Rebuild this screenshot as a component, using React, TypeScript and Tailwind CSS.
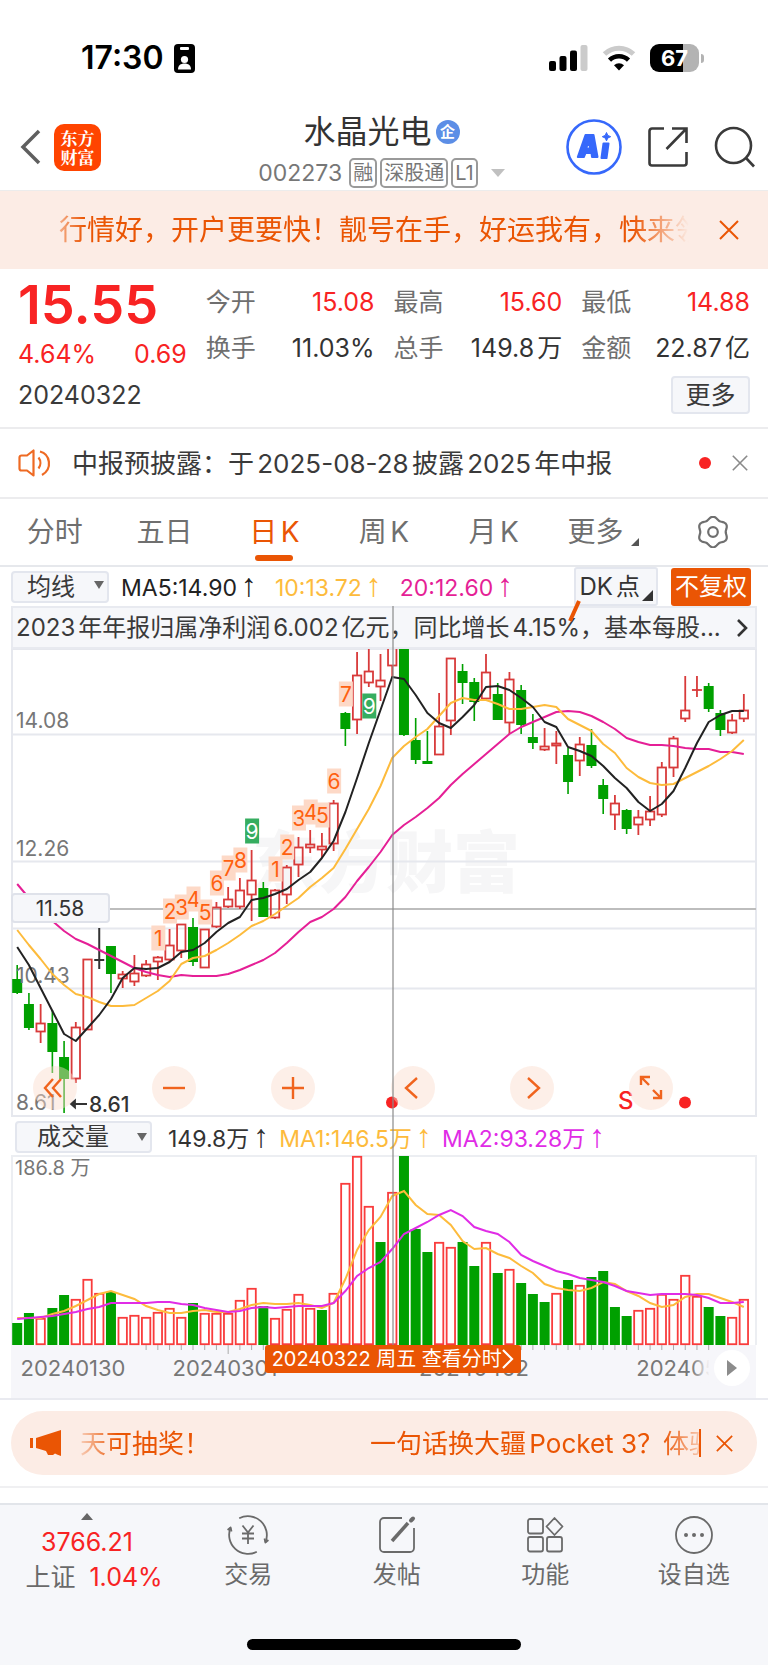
import React from "react";
import { clsx } from "clsx";

type Candle = [high: number, top: number, bottom: number, low: number, kind: "up" | "down" | "flat"];

const STEP = 11.72;
const cx = (i: number) => 6.2 + STEP * i;

const CANDLES: Candle[] = [
  [316, 330, 344, 345, "down"], [344, 355, 379, 381, "down"], [355, 374, 383, 394, "up"],
  [361, 374, 403, 424, "down"], [392, 408, 430, 464, "down"], [373, 378, 430, 434, "up"],
  [310, 310, 381, 381, "up"], [279, 311, 311, 320, "flat"], [297, 297, 325, 344, "down"],
  [322, 325, 330, 339, "up"], [306, 324, 333, 337, "up"], [311, 315, 327, 328, "up"],
  [307, 308, 313, 331, "up"], [280, 296, 311, 313, "up"], [275, 275, 302, 309, "up"],
  [269, 278, 313, 317, "down"], [280, 280, 319, 319, "up"], [253, 258, 278, 279, "up"],
  [238, 250, 258, 259, "up"], [229, 241, 258, 260, "up"], [201, 231, 246, 272, "up"],
  [233, 239, 268, 268, "down"], [240, 241, 269, 270, "up"], [216, 218, 246, 255, "up"],
  [188, 198, 216, 228, "up"], [181, 195, 199, 204, "up"], [184, 197, 201, 209, "up"],
  [151, 154, 195, 202, "up"], [63, 64, 80, 97, "down"], [3, 26, 71, 85, "up"],
  [0, 22, 34, 38, "up"], [5, 31, 38, 52, "up"], [-8, -6, 17, 29, "up"],
  [-1, -1, 86, 87, "down"], [69, 91, 111, 115, "down"], [82, 112, 115, 115, "down"],
  [44, 77, 106, 106, "up"], [9, 9, 72, 86, "up"], [15, 22, 34, 55, "down"],
  [29, 33, 53, 72, "down"], [5, 23, 50, 51, "up"], [34, 45, 71, 71, "down"],
  [23, 30, 74, 85, "up"], [36, 41, 76, 85, "down"], [65, 88, 94, 100, "down"],
  [79, 97, 101, 102, "up"], [82, 94, 97, 115, "up"], [99, 106, 133, 145, "down"],
  [88, 95, 112, 127, "up"], [80, 96, 117, 119, "down"], [130, 136, 150, 165, "down"],
  [146, 154, 166, 181, "up"], [160, 161, 180, 185, "down"], [161, 168, 176, 186, "up"],
  [147, 162, 171, 177, "up"], [113, 118, 166, 168, "up"], [87, 89, 119, 128, "up"],
  [27, 61, 70, 73, "up"], [27, 41, 41, 48, "up"], [34, 37, 60, 63, "down"],
  [61, 64, 81, 87, "down"], [65, 71, 84, 85, "up"], [45, 61, 70, 73, "up"],
];

const MA5 = [298, 316, 339, 362, 385, 392, 379, 366, 350, 329, 319, 320, 319, 313, 303, 301, 294, 283, 274, 268, 251, 249, 245, 240, 231, 223, 209, 192, 163, 129, 94, 61, 28, 30, 46, 64, 74, 79, 68, 56, 38, 37, 41, 49, 58, 73, 78, 98, 102, 107, 117, 129, 139, 153, 162, 155, 142, 119, 94, 73, 66, 62, 62];
const MA10 = [281, 296, 310, 325, 336, 345, 348, 353, 357, 357, 356, 349, 342, 332, 315, 309, 307, 301, 294, 286, 277, 272, 265, 257, 249, 238, 229, 219, 200, 180, 160, 137, 109, 97, 88, 80, 67, 54, 49, 51, 51, 55, 60, 60, 58, 56, 58, 70, 76, 82, 95, 104, 119, 128, 134, 136, 135, 129, 123, 117, 110, 102, 91];
const MA20 = [235, 249, 261, 272, 282, 290, 295, 301, 307, 313, 319, 323, 326, 328, 326, 327, 327, 327, 325, 321, 316, 311, 304, 294, 283, 273, 268, 260, 248, 232, 218, 203, 186, 176, 168, 159, 149, 136, 125, 115, 105, 95, 85, 78, 73, 68, 63, 62, 63, 67, 73, 80, 89, 93, 96, 96, 97, 99, 100, 100, 103, 103, 105];

const VOLUME_TOPS = [168, 158, 163, 153, 140, 144, 124, 138, 137, 162, 160, 162, 157, 153, 162, 148, 158, 158, 158, 145, 133, 151, 163, 154, 139, 153, 155, 138, 28, 1, 51, 87, 37, 1, 74, 97, 87, 92, 87, 111, 87, 118, 114, 128, 139, 147, 138, 125, 130, 122, 116, 152, 161, 155, 153, 139, 144, 120, 141, 152, 161, 162, 144];
const VOLUME_DOWN = new Set([0, 1, 3, 4, 8, 15, 21, 26, 31, 33, 34, 35, 38, 39, 41, 43, 44, 45, 47, 49, 50, 51, 52, 59, 60]);
const VOL_MA1 = [163, 163, 163, 159, 156, 151, 145, 139, 136, 140, 144, 151, 155, 158, 158, 156, 155, 157, 157, 154, 150, 148, 149, 149, 148, 150, 153, 148, 124, 95, 75, 62, 41, 36, 50, 59, 60, 70, 86, 94, 93, 99, 103, 111, 118, 129, 133, 135, 136, 133, 127, 129, 136, 141, 148, 152, 150, 142, 139, 139, 143, 147, 152];
const VOL_MA2 = [164, 163, 162, 161, 159, 157, 154, 152, 148, 148, 148, 148, 147, 147, 149, 150, 153, 155, 157, 156, 153, 152, 153, 152, 151, 151, 151, 148, 136, 121, 113, 107, 94, 79, 73, 67, 60, 55, 61, 72, 76, 79, 87, 100, 106, 111, 116, 119, 123, 125, 127, 131, 136, 138, 140, 139, 139, 139, 140, 143, 148, 148, 147];

// nine-turn counts, [candle index, centre y, digit]
const TURNS: [number, number, string][] = [
  [12, 289, "1"], [13, 262, "2"], [14, 258, "3"], [15, 250, "4"], [16, 263, "5"], [17, 234, "6"],
  [18, 219, "7"], [19, 211, "8"], [20, 182, "9"], [22, 220, "1"], [23, 198, "2"], [24, 169, "3"],
  [25, 163, "4"], [26, 166, "5"], [27, 132, "6"], [28, 45, "7"], [30, 57, "9"],
];

const linePoints = (ys: number[]) => ys.map((y, i) => `${cx(i).toFixed(1)},${y}`).join(" ");

const gearPoints = Array.from({ length: 72 }, (_, k) => {
  const a = (k * Math.PI) / 36;
  const r = 14 - 1.3 * Math.cos(6 * a);
  return `${(17 + r * Math.cos(a)).toFixed(2)},${(16 + r * Math.sin(a)).toFixed(2)}`;
}).join(" ");

function CloseIcon({ className }: { className?: string }) {
  return (
    <svg viewBox="0 0 20 20" className={className} fill="none" stroke="currentColor" strokeWidth="2">
      <path d="M1 1l18 18M19 1L1 19" />
    </svg>
  );
}

function StatusBar() {
  return (
    <div className="flex h-[114px] items-center justify-between pt-[2px] pr-[64px] pl-[81px] text-black">
      <div className="flex items-center gap-[10px]">
        <span className="text-[32px] font-semibold">17:30</span>
        <svg viewBox="0 0 21 29" className="h-[29px] w-[21px]">
          <rect width="21" height="29" rx="4" />
          <rect x="6" y="3" width="9" height="3" rx="1" fill="#fff" />
          <circle cx="10.500" cy="15.500" r="3.600" fill="#fff" />
          <path d="M4 25.500c0-4 2.500-6 6.500-6s6.500 2 6.500 6z" fill="#fff" />
        </svg>
      </div>
      <div className="flex items-center gap-[14px]">
        <svg viewBox="0 0 39 26" className="h-[26px] w-[39px]">
          <rect x="0" y="16" width="7" height="10" rx="2" />
          <rect x="10.500" y="11" width="7" height="15" rx="2" />
          <rect x="21" y="5.500" width="7" height="20.500" rx="2" />
          <rect x="31.500" y="0" width="7" height="26" rx="2" fill="#cbcbcb" />
        </svg>
        <svg viewBox="0 0 34 26" className="h-[26px] w-[34px]" fill="none">
          <path d="M2.500 9a21 21 0 0 1 29 0" stroke="#cbcbcb" strokeWidth="5" />
          <path d="M7.500 15.200a13.500 13.500 0 0 1 19 0" stroke="#000" strokeWidth="4.500" />
          <path d="M17 25.500l-5-5.300a7.200 7.200 0 0 1 10 0z" fill="#000" />
        </svg>
        <div className="flex items-center gap-[2px]">
          <div className="flex h-[28px] w-[49px] items-center justify-center rounded-[9px] bg-linear-to-r from-black from-67% to-[#b3b3b3] to-67% text-[22px] font-bold text-white">
            67
          </div>
          <div className="h-[9px] w-[3px] rounded-r-full bg-[#b3b3b3]" />
        </div>
      </div>
    </div>
  );
}

function Header() {
  return (
    <header className="flex h-[77px] items-center justify-between border-b border-[#ececec] pr-[12px] pl-[19px]">
      <div className="flex w-[178px] items-center gap-[13px] pb-[10px]">
        <button aria-label="返回">
          <svg viewBox="0 0 22 36" className="h-[36px] w-[22px]" fill="none" stroke="#5f5f5f" strokeWidth="3.500">
            <path d="M20 2L4 18l16 16" />
          </svg>
        </button>
        <div className="flex size-[47px] flex-col items-center justify-center rounded-[10px] bg-[#ff4400] font-['Noto_Serif_CJK_SC','Noto_Sans_CJK_SC',serif] text-[17px] leading-[19px] font-bold text-white">
          <span>东方</span>
          <span>财富</span>
        </div>
      </div>
      <div className="flex flex-col items-center gap-[7px] pb-[4px]">
        <h1 className="flex items-center gap-1 text-[32px] leading-[38px] text-[#333]">
          水晶光电
          <span className="flex size-[24px] items-center justify-center rounded-full bg-[#5c8ee6] text-[15px] font-bold text-white">企</span>
        </h1>
        <div className="flex items-center gap-[3px] text-[20px] leading-[28px] text-[#777]">
          <span className="pr-1 text-[23px]">002273</span>
          {["融", "深股通", "L1"].map((tag) => (
            <span key={tag} className="rounded-[5px] border-2 border-[#9a9a9a] px-[2px] leading-[26px]">{tag}</span>
          ))}
          <svg viewBox="0 0 14 8" className="ml-[10px] h-[8px] w-[14px]" fill="#c0c0c0">
            <path d="M0 0h14L7 8z" />
          </svg>
        </div>
      </div>
      <div className="flex w-[190px] items-center justify-end gap-[26px] pb-[10px] text-[#3a3a3a]">
        <button aria-label="Ai">
          <svg viewBox="0 0 56 56" className="size-[56px]">
            <circle cx="28" cy="28" r="26.500" fill="none" stroke="#3668fb" strokeWidth="2.600" />
            <g fill="#3668fb" stroke="#3668fb" strokeWidth="2" strokeLinejoin="round">
              <path fillRule="evenodd" d="M19.500 16h8l4 22h-5.500l-.5-4h-6l-1.700 4h-6zM22.500 23l-2.400 6.500h4.300z" />
              <path d="M37.500 24.500h5L40.500 39h-5z" />
              <path strokeWidth="1" d="M40.500 13.500l1.300 2.900 2.900 1.300-2.900 1.300-1.300 2.900-1.300-2.900-2.900-1.300 2.900-1.300z" />
            </g>
          </svg>
        </button>
        <button aria-label="分享">
          <svg viewBox="0 0 40 40" className="size-[40px]" fill="none" stroke="currentColor" strokeWidth="2.600">
            <path d="M16 1.500H4A2.500 2.500 0 0 0 1.500 4v32A2.500 2.500 0 0 0 4 38.500h32a2.500 2.500 0 0 0 2.500-2.500V25" />
            <path d="M24 1.500h14.500V16M38.500 1.500L18.500 22" />
          </svg>
        </button>
        <button aria-label="搜索">
          <svg viewBox="0 0 42 42" className="size-[42px]" fill="none" stroke="currentColor" strokeWidth="2.600">
            <circle cx="19.500" cy="19.500" r="17.500" />
            <path d="M32 32l8 8.500" />
          </svg>
        </button>
      </div>
    </header>
  );
}

function PromoBanner() {
  return (
    <div className="flex h-[78px] items-center justify-between bg-[#fcece5] pr-[29px] pl-[59px] text-[#ea5504]">
      <p className="w-[630px] overflow-hidden text-[28px] whitespace-nowrap [mask-image:linear-gradient(to_right,#0006,#000_4%,#000_91%,transparent)]">
        行情好，开户更要快！靓号在手，好运我有，快来领
      </p>
      <button aria-label="关闭"><CloseIcon className="size-[20px]" /></button>
    </div>
  );
}

const STATS = [
  { label: "今开", value: "15.08", red: true },
  { label: "最高", value: "15.60", red: true },
  { label: "最低", value: "14.88", red: true },
  { label: "换手", value: "11.03%" },
  { label: "总手", value: "149.8万" },
  { label: "金额", value: "22.87亿" },
];

function Quote() {
  return (
    <section className="border-b-2 border-[#ececee] px-[18px] pt-[10px] pb-[12px]">
      <div className="grid grid-cols-4 gap-x-[19px]">
        <div className="text-[#f82323]">
          <div className="text-[54px] leading-[52px] font-semibold">15.55</div>
          <div className="flex justify-between pt-[2px] text-[25px] leading-[42px]">
            <span>4.64%</span>
            <span>0.69</span>
          </div>
        </div>
        <dl className="col-span-3 grid grid-cols-3 content-start gap-x-[19px] text-[25px] leading-[46px]">
          {STATS.map((s) => (
            <div key={s.label} className="flex justify-between whitespace-nowrap">
              <dt className="text-[#6f6f6f]">{s.label}</dt>
              <dd className={s.red ? "text-[#f82323]" : "text-[#333]"}>{s.value}</dd>
            </div>
          ))}
        </dl>
      </div>
      <div className="flex items-center justify-between text-[25px] leading-[40px] text-[#3a3a3a]">
        <span>20240322</span>
        <button className="h-[38px] w-[79px] rounded-[4px] border-2 border-[#e3e6ee] bg-[#f6f7fa] leading-[33px]">更多</button>
      </div>
    </section>
  );
}

function Notice() {
  return (
    <div className="flex h-[70px] items-center border-b-2 border-[#ececee] pr-[20px] pl-[18px]">
      <svg viewBox="0 0 34 28" className="h-[28px] w-[34px]" fill="none" stroke="#ee6a23" strokeWidth="2.200" strokeLinejoin="round">
        <path d="M15.500 1.500v25L9 21.500H3.500a2 2 0 0 1-2-2v-11a2 2 0 0 1 2-2H9z" />
        <path d="M20.500 8.500a9 9 0 0 1 0 11M22 2.500c10 2.500 13 17 2 23.500" />
      </svg>
      <p className="ml-[20px] flex-1 text-[26px] text-[#3a3a3a]">中报预披露：于2025-08-28披露2025年中报</p>
      <span className="size-[12px] rounded-full bg-[#f82323]" />
      <button aria-label="关闭" className="ml-[21px] text-[#8a8a8a]"><CloseIcon className="size-[16px]" /></button>
    </div>
  );
}

function PeriodTabs() {
  const tabs = ["分时", "五日", "日K", "周K", "月K"];
  return (
    <nav className="flex h-[68px] border-b-2 border-[#e6e8ec] text-[28px] text-[#6f6f6f]">
      {tabs.map((t) => (
        <button key={t} className={clsx("relative flex-1", t === "日K" && "text-[#ea5504]")}>
          {t}
          {t === "日K" && <span className="absolute inset-x-9 bottom-[4px] h-[6px] rounded-full bg-[#ea5504]" />}
        </button>
      ))}
      <button className="flex flex-1 items-center justify-center gap-2">
        更多
        <svg viewBox="0 0 8 8" className="mt-5 size-[8px]" fill="#555"><path d="M8 0v8H0z" /></svg>
      </button>
      <button aria-label="设置" className="flex flex-1 items-center justify-center">
        <svg viewBox="0 0 34 32" className="h-[32px] w-[34px]" fill="none" stroke="currentColor" strokeWidth="2.200" strokeLinejoin="round">
          <polygon points={gearPoints} />
          <circle cx="17" cy="16" r="4.800" />
        </svg>
      </button>
    </nav>
  );
}

function IndicatorSelect({ label, value, wide }: { label: string; value: string; wide?: boolean }) {
  return (
    <div className="relative">
      <select
        aria-label={label}
        className={clsx("h-[32px] appearance-none rounded-[4px] border-2 border-[#e3e6ee] bg-[#f6f7fa] text-[24px] leading-[28px] text-[#3a3a3a]", wide ? "w-[137px] pl-[20px]" : "w-[98px] pl-[14px]")}
      >
        <option>{value}</option>
      </select>
      <svg viewBox="0 0 10 8" className="pointer-events-none absolute top-3 right-[5px] h-[8px] w-[10px]" fill="#666">
        <path d="M0 0h10L5 8z" />
      </svg>
    </div>
  );
}

function Reading({ text, className }: { text: string; className: string }) {
  return (
    <span className={className}>
      {text}
      <span className="pl-1 font-['Liberation_Sans',sans-serif] text-[32px] leading-none">↑</span>
    </span>
  );
}

function Candlestick({ candle, i }: { candle: Candle; i: number }) {
  const [high, top, bottom, low, kind] = candle;
  const x = cx(i);
  if (kind === "flat") {
    return <path d={`M${x} ${high}V${low}M${x - 5} ${top}h10`} stroke="#333" strokeWidth="2" />;
  }
  if (kind === "down") {
    return (
      <g fill="#00a000">
        <rect x={x - 0.8} y={high} width="1.600" height={low - high} />
        <rect x={x - 5} y={top} width="10" height={bottom - top} />
      </g>
    );
  }
  return (
    <g stroke="#d83a3a" strokeWidth="1.800" fill="none">
      <path d={`M${x} ${high}V${top}M${x} ${bottom}V${low}`} />
      {top === bottom ? <path d={`M${x - 5} ${top}h10`} /> : <rect x={x - 4.2} y={top + 0.5} width="8.400" height={bottom - top - 1} />}
    </g>
  );
}

function PriceChart() {
  return (
    <svg viewBox="0 0 746 468" className="block h-auto w-full overflow-hidden font-['Inter','Noto_Sans_CJK_SC',sans-serif]">
      <text x="375" y="238" textAnchor="middle" fontSize="67" fontWeight="900" fill="#f6f6f7">东方财富</text>
      <g stroke="#e6e8ee" strokeWidth="2" fill="none">
        <rect x="1" y="0" width="744" height="467" />
        <path d="M1 85.500h744M1 212.500h744M1 279.500h744M1 339.500h744" />
      </g>
      <path d="M90 260h655" stroke="#bdbdbd" strokeWidth="2" />
      {CANDLES.map((c, i) => <Candlestick key={i} candle={c} i={i} />)}
      <g fontSize="21" fill="#777">
        <text x="5" y="79">14.08</text>
        <text x="5" y="207">12.26</text>
        <text x="5" y="334">10.43</text>
        <text x="5" y="461">8.61</text>
      </g>
      {TURNS.map(([i, y, n]) => (
        <g key={i}>
          <rect x={cx(i) - 6.5} y={y - 12.5} width="14" height="25" fill={n === "9" ? "#36ad60" : "#fdd9c7"} />
          <text x={cx(i) + 0.5} y={y + 7.5} textAnchor="middle" fontSize="21" fill={n === "9" ? "#fff" : "#ff6010"}>{n}</text>
        </g>
      ))}
      <g fill="none" strokeLinejoin="round">
        <polyline points={linePoints(MA20)} stroke="#e51f96" strokeWidth="2" />
        <polyline points={linePoints(MA10)} stroke="#fdbb3c" strokeWidth="2" />
        <polyline points={linePoints(MA5)} stroke="#222" strokeWidth="2" />
      </g>
      <rect x="1" y="245" width="97" height="28" rx="3" fill="#f6f7fa" stroke="#dfe2ea" strokeWidth="2" />
      <text x="49" y="267" textAnchor="middle" fontSize="21" fill="#333">11.58</text>
      <path d="M76 455H60M60 455l4-3.500v7z" stroke="#333" strokeWidth="1.800" fill="#333" />
      <text x="78" y="463" fontSize="21" fontWeight="500" fill="#333">8.61</text>
      <circle cx="381" cy="453.500" r="6" fill="#f82323" />
      <circle cx="674" cy="453.500" r="6" fill="#f82323" />
      <text x="607" y="460" fontSize="24" fontWeight="500" fill="#f82323">S</text>
    </svg>
  );
}

const CONTROLS = [
  { label: "最早", d: "M20 13l-8 9 8 9M28 13l-8 9 8 9" },
  { label: "缩小", d: "M11 22h22" },
  { label: "放大", d: "M11 22h22M22 11v22" },
  { label: "向左", d: "M26 12L15 22l11 10" },
  { label: "向右", d: "M18 12l11 10-11 10" },
  { label: "全屏", d: "M12 19v-8h9M12 11l8 8M32 24v8h-8M32 32l-8-8" },
];

function ChartControls() {
  return (
    <div className="absolute inset-x-0 bottom-[7px] flex justify-between pr-[84px] pl-[22px]">
      {CONTROLS.map((c) => (
        <button key={c.label} aria-label={c.label} className="size-[44px] rounded-full bg-[#fbdccd]/45 text-[#f0641e]">
          <svg viewBox="0 0 44 44" fill="none" stroke="currentColor" strokeWidth="2.400"><path d={c.d} /></svg>
        </button>
      ))}
    </div>
  );
}

function VolumeChart() {
  return (
    <svg viewBox="0 0 746 243" className="block h-auto w-full font-['Inter','Noto_Sans_CJK_SC',sans-serif]">
      <rect x="0" y="190" width="745" height="53" fill="#f6f6fa" />
      <path d="M1 190V1h744v189" stroke="#eceef2" strokeWidth="2" fill="none" />
      <text x="4" y="20" fontSize="20" fill="#777">186.8 万</text>
      {VOLUME_TOPS.map((y, i) =>
        VOLUME_DOWN.has(i) ? (
          <rect key={i} x={cx(i) - 5} y={y} width="10" height={190 - y} fill="#00a000" />
        ) : (
          <rect key={i} x={cx(i) - 4.2} y={y + 0.8} width="8.400" height={188.4 - y} fill="#fff" stroke="#f93c3c" strokeWidth="1.800" />
        )
      )}
      <polyline points={linePoints(VOL_MA1)} stroke="#fdbb3c" strokeWidth="2" fill="none" />
      <polyline points={linePoints(VOL_MA2)} stroke="#e02ce6" strokeWidth="2" fill="none" />
      {VOLUME_TOPS.map((_, i) =>
        i > 10 && i < 60 ? <path key={i} d={`M${cx(i)} 190v${i === 18 ? 9 : 5}`} stroke="#aaa" strokeWidth="1" /> : null
      )}
      <g fontSize="22" fill="#777" textAnchor="middle">
        <text x="62" y="221">20240130</text>
        <text x="214" y="221">20240301</text>
        <text x="463" y="221">20240402</text>
        <text x="680" y="221">20240506</text>
      </g>
    </svg>
  );
}

function Charts() {
  return (
    <section className="relative border-b-2 border-[#e9eaf0]">
      <div className="flex h-[39px] items-center px-[11px] text-[24px] whitespace-nowrap">
        <IndicatorSelect label="主图指标" value="均线" />
        <div className="ml-[12px] flex items-center gap-[18px] text-[23px] leading-[32px]">
          <Reading text="MA5:14.90" className="text-[#222]" />
          <Reading text="10:13.72" className="text-[#fdbb3c]" />
          <Reading text="20:12.60" className="text-[#e51f96]" />
        </div>
        <button className="relative ml-auto h-[39px] rounded-[3px] border-2 border-[#e3e6ee] bg-[#f6f7fa] pr-[16px] pl-[4px] text-[#333]">
          DK点
          <svg viewBox="0 0 12 12" className="absolute right-[3px] bottom-[3px] size-[11px]" fill="#333"><path d="M12 0v12H0z" /></svg>
        </button>
        <button className="mr-[6px] ml-[13px] h-[38px] w-[80px] rounded-[3px] bg-[#ea5504] text-white">不复权</button>
      </div>
      <div className="mx-[11px] flex h-[43px] items-center justify-between border-2 border-[#e8eaf0] bg-[#f6f7fa] pr-[7px] pl-[3px] text-[24px] text-[#3a3a3a]">
        <a href="#report" className="truncate">2023年年报归属净利润6.002亿元，同比增长4.15%，基本每股...</a>
        <svg viewBox="0 0 11 18" className="h-[18px] w-[11px] shrink-0" fill="none" stroke="#333" strokeWidth="2.600"><path d="M1 1l8 8-8 8" /></svg>
      </div>
      <div className="relative mx-[11px]">
        <PriceChart />
        <ChartControls />
      </div>
      <div className="flex h-[38px] items-center pt-[2px] pr-[11px] pl-[15px] whitespace-nowrap">
        <IndicatorSelect label="副图指标" value="成交量" wide />
        <div className="ml-[16px] flex items-center gap-[10px] text-[23px] leading-[32px] [text-autospace:no-autospace]">
          <Reading text="149.8万" className="text-[#333]" />
          <Reading text="MA1:146.5万" className="text-[#fdbb3c]" />
          <Reading text="MA2:93.28万" className="text-[#e02ce6]" />
        </div>
      </div>
      <div className="relative mx-[11px]">
        <VolumeChart />
        <button className="absolute bottom-[25px] left-[34%] flex h-[28px] items-center rounded-[3px] bg-[#ea5504] px-[7px] text-[20px] whitespace-nowrap text-white">
          20240322 周五 查看分时
          <svg viewBox="0 0 12 20" className="h-[20px] w-[12px]" fill="none" stroke="#fff" strokeWidth="2.200"><path d="M1 1l9 9-9 9" /></svg>
        </button>
        <div className="absolute right-[7px] bottom-[12px] flex bg-linear-to-r from-transparent to-[#f6f6fa] to-30% pl-[22px]">
          <button aria-label="下一页" className="flex size-[36px] items-center justify-center rounded-full bg-white">
            <svg viewBox="0 0 10 16" className="h-[16px] w-[10px]" fill="#8c8c8c"><path d="M0 0l10 8-10 8z" /></svg>
          </button>
        </div>
      </div>
      {/* crosshair */}
      <div className="pointer-events-none absolute top-[39px] bottom-[53px] left-[51%] w-[2px] bg-[#8a8a8a]/60" />
      <svg viewBox="0 0 14 24" className="pointer-events-none absolute top-[32px] left-[74%] h-[24px] w-[14px]" stroke="#ea5504" strokeWidth="4"><path d="M11 2L2 22" /></svg>
    </section>
  );
}

function PromoPill() {
  return (
    <div className="border-b-2 border-[#f0f0f2] px-[11px] pt-[11px] pb-[11px]">
      <div className="flex h-[64px] items-center rounded-full bg-[#fcece5] pr-[24px] pl-[19px] text-[26px] text-[#ea5504]">
        <svg viewBox="0 0 32 26" className="h-[26px] w-[32px]" fill="#ea5504">
          <path d="M0 8h3v10H0zM6 8L31 0v26l-4-1.500-2-1-2 1.500h-5l-2-4-10-3z" />
        </svg>
        <p className="ml-[18px] flex flex-1 justify-between overflow-hidden whitespace-nowrap [mask-image:linear-gradient(to_right,#0003,#000_6%,#000_94%,#0004)]">
          <span>天可抽奖！</span>
          <span className="-mr-4">一句话换大疆Pocket 3？体验</span>
        </p>
        <span className="h-[28px] w-[2px] bg-[#ea5504]" />
        <button aria-label="关闭" className="ml-[15px]"><CloseIcon className="size-[17px]" /></button>
      </div>
    </div>
  );
}

const NAV_ICONS = {
  交易: (
    <>
      <path d="M11.200 3.200A19 19 0 0 1 37.400 27.400M28.800 36.800A19 19 0 0 1 2.600 12.600" />
      <path d="M36.500 23.500l.9 4 3-2.500M3.500 16.500l-.9-4-3 2.500" />
      <path d="M14.500 10.500l5.500 7 5.500-7M14 18.500h12M14 23.500h12M20 17v12" />
    </>
  ),
  发帖: (
    <>
      <path d="M25 3H7a4 4 0 0 0-4 4v26a4 4 0 0 0 4 4h26a4 4 0 0 0 4-4V13" />
      <path d="M15 26l16-18" strokeWidth="3.500" />
      <path d="M34 5.500l2-2" strokeWidth="4" strokeLinecap="round" />
    </>
  ),
  功能: (
    <>
      <rect x="3" y="4" width="15" height="14.500" rx="2" />
      <rect x="3" y="22" width="15" height="14.500" rx="2" />
      <rect x="22" y="22" width="15" height="14.500" rx="2" />
      <path d="M29.500 3l8 8.500-8 8.500-8-8.500z" />
    </>
  ),
  设自选: (
    <>
      <circle cx="20" cy="20" r="18" />
      <path d="M12 20h.01M20 20h.01M28 20h.01" strokeWidth="4" strokeLinecap="round" />
    </>
  ),
};

function BottomNav() {
  return (
    <footer className="border-t-2 border-[#e2e5ea] bg-[#f6f7fa] text-[24px] leading-[32px] text-[#6a6a6a]">
      <nav className="flex h-[134px] pt-[8px]">
        <button className="flex w-[174px] flex-col items-center">
          <svg viewBox="0 0 12 7" className="h-[7px] w-[12px]" fill="#666"><path d="M6 0l6 7H0z" /></svg>
          <span className="mt-[5px] text-[25px] leading-[35px] text-[#f82323]">3766.21</span>
          <span className="flex gap-[14px] pl-[14px] text-[25px] leading-[35px]">
            上证 <span className="text-[#f82323]">1.04%</span>
          </span>
        </button>
        {Object.entries(NAV_ICONS).map(([name, icon]) => (
          <button key={name} className="flex flex-1 flex-col items-center gap-[4px]">
            <svg viewBox="0 0 40 40" className="mt-[2px] size-[40px] overflow-visible" fill="none" stroke="currentColor" strokeWidth="1.800" strokeLinejoin="round">{icon}</svg>
            <span>{name}</span>
          </button>
        ))}
      </nav>
      <div className="flex justify-center pb-[15px]">
        <div className="h-[11px] w-[274px] rounded-full bg-black" />
      </div>
    </footer>
  );
}

export default function App() {
  return (
    <div className="bg-white font-['Inter','Noto_Sans_CJK_SC',sans-serif] [text-autospace:normal]">
      <StatusBar />
      <Header />
      <PromoBanner />
      <Quote />
      <Notice />
      <PeriodTabs />
      <Charts />
      <PromoPill />
      <div className="h-[15px]" />
      <BottomNav />
    </div>
  );
}
